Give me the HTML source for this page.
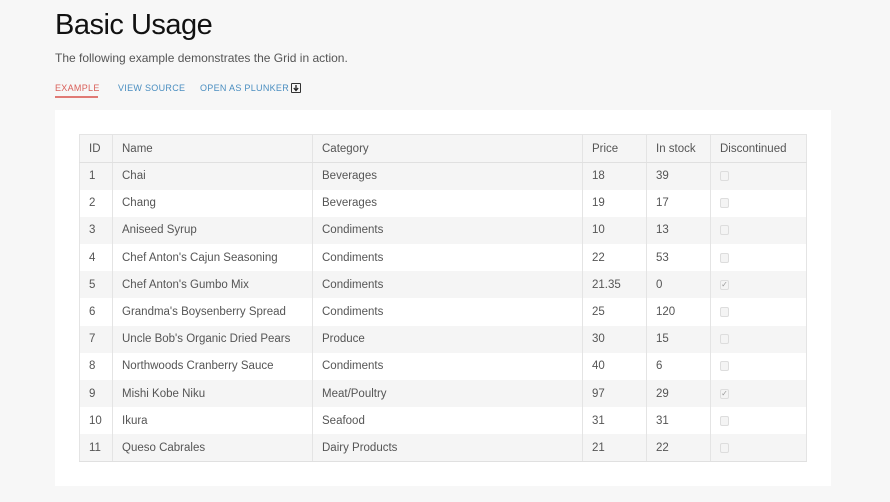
<!DOCTYPE html>
<html><head><meta charset="utf-8"><style>
*{margin:0;padding:0;box-sizing:border-box}
body{width:890px;height:502px;background:#f7f7f7;font-family:"Liberation Sans",sans-serif;position:relative;overflow:hidden}
h1{position:absolute;left:55px;top:9px;font-size:29px;font-weight:normal;color:#111;letter-spacing:-0.5px}
.sub{position:absolute;left:55px;top:51px;font-size:12px;color:#555}
.tab{position:absolute;top:83px;font-size:9px;letter-spacing:0.3px;color:#4a8ec0}
.tab.a{color:#d9605a}
.ul{position:absolute;left:55px;top:96px;width:43px;height:2px;background:#e07a75}
.ico{position:absolute;left:291px;top:83px;width:10px;height:10px;border:1px solid #333;border-radius:1px}
.panel{position:absolute;left:55px;top:110px;width:776px;height:376px;background:#fff}
table{position:absolute;left:79px;top:134px;border-collapse:collapse;font-size:11.5px;color:#555}
td,th{height:27px;padding:0 0 0 9px;text-align:left;font-weight:normal;border-left:1px solid #e4e4e4;white-space:nowrap}
td{height:27.2px}
th{height:28px;background:#f5f5f5;color:#555;border-bottom:1px solid #e0e0e0;border-top:1px solid #e4e4e4}
tr td:last-child,tr th:last-child{border-right:1px solid #e4e4e4}
tbody tr:nth-child(odd){background:#f5f5f5}
tbody tr:last-child td{border-bottom:1px solid #e0e0e0}
.cb{display:inline-block;width:9px;height:10px;border:1px solid #ddd;border-radius:2px;background:#f4f4f4;vertical-align:middle;font-size:8px;line-height:8px;text-align:center;color:#999}
</style></head><body>
<h1>Basic Usage</h1>
<div class="sub">The following example demonstrates the Grid in action.</div>
<div class="tab a" style="left:55px">EXAMPLE</div>
<div class="tab" style="left:118px">VIEW SOURCE</div>
<div class="tab" style="left:200px">OPEN AS PLUNKER</div>
<div class="ul"></div>
<div class="ico"><svg width="8" height="8" viewBox="0 0 8 8" style="display:block"><path d="M4 1V6M1.8 4L4 6.5 6.2 4" stroke="#222" stroke-width="1.3" fill="none"/></svg></div>
<div class="panel"></div>
<table>
<colgroup><col style="width:33px"><col style="width:200px"><col style="width:270px"><col style="width:64px"><col style="width:64px"><col style="width:96px"></colgroup>
<thead><tr><th>ID</th><th>Name</th><th>Category</th><th>Price</th><th>In stock</th><th>Discontinued</th></tr></thead>
<tbody>
<tr><td>1</td><td>Chai</td><td>Beverages</td><td>18</td><td>39</td><td><span class="cb"></span></td></tr>
<tr><td>2</td><td>Chang</td><td>Beverages</td><td>19</td><td>17</td><td><span class="cb"></span></td></tr>
<tr><td>3</td><td>Aniseed Syrup</td><td>Condiments</td><td>10</td><td>13</td><td><span class="cb"></span></td></tr>
<tr><td>4</td><td>Chef Anton's Cajun Seasoning</td><td>Condiments</td><td>22</td><td>53</td><td><span class="cb"></span></td></tr>
<tr><td>5</td><td>Chef Anton's Gumbo Mix</td><td>Condiments</td><td>21.35</td><td>0</td><td><span class="cb">✓</span></td></tr>
<tr><td>6</td><td>Grandma's Boysenberry Spread</td><td>Condiments</td><td>25</td><td>120</td><td><span class="cb"></span></td></tr>
<tr><td>7</td><td>Uncle Bob's Organic Dried Pears</td><td>Produce</td><td>30</td><td>15</td><td><span class="cb"></span></td></tr>
<tr><td>8</td><td>Northwoods Cranberry Sauce</td><td>Condiments</td><td>40</td><td>6</td><td><span class="cb"></span></td></tr>
<tr><td>9</td><td>Mishi Kobe Niku</td><td>Meat/Poultry</td><td>97</td><td>29</td><td><span class="cb">✓</span></td></tr>
<tr><td>10</td><td>Ikura</td><td>Seafood</td><td>31</td><td>31</td><td><span class="cb"></span></td></tr>
<tr><td>11</td><td>Queso Cabrales</td><td>Dairy Products</td><td>21</td><td>22</td><td><span class="cb"></span></td></tr>
</tbody></table>
</body></html>
